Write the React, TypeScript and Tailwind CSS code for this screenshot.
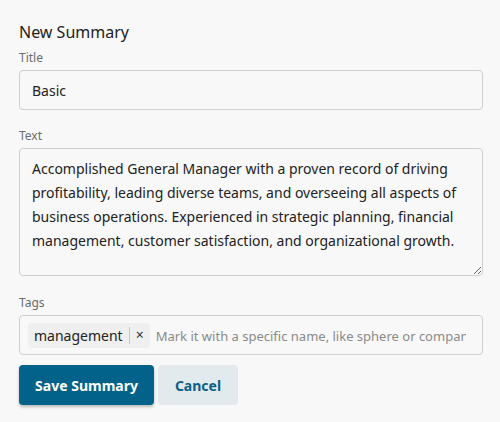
import { useState } from "react";

const summaryText =
  "Accomplished General Manager with a proven record of driving profitability, leading diverse teams, and overseeing all aspects of business operations. Experienced in strategic planning, financial management, customer satisfaction, and organizational growth.";

export default function App() {
  const [title, setTitle] = useState("Basic");
  const [text, setText] = useState(summaryText);
  const [tags, setTags] = useState<string[]>(["management"]);

  return (
    <div className="min-h-[422px] bg-[#f8f8f8] px-[19px] pt-5 text-[#222] [font-family:'Noto_Sans',sans-serif]">
      <h2 className="text-[16px] leading-6">New Summary</h2>

      <label className="mt-[5px] block text-[12px] leading-[18px] text-[#6b6b6b]">Title</label>
      <input
        value={title}
        onChange={(e) => setTitle(e.target.value)}
        className="mt-[3px] block h-10 w-[464px] rounded border border-[#cfcfcf] bg-[#f8f8f8] px-3 text-[14px] outline-none"
      />

      <label className="mt-[17px] block text-[12px] leading-[18px] text-[#6b6b6b]">Text</label>
      <textarea
        value={text}
        onChange={(e) => setText(e.target.value)}
        className="mt-[3px] block h-32 w-[464px] rounded border border-[#cfcfcf] bg-[#f8f8f8] px-3 py-2 text-[14px] leading-6 outline-none"
      />

      <label className="mt-[18px] block text-[12px] leading-[18px] text-[#6b6b6b]">Tags</label>
      <div className="mt-[3px] flex h-10 w-[464px] items-center gap-[6px] overflow-hidden rounded border border-[#cfcfcf] bg-[#f8f8f8] pl-2">
        {tags.map((tag) => (
          <span key={tag} className="flex h-[25px] shrink-0 items-center rounded-sm bg-[#efefef] pl-[6px] text-[14px]">
            {tag}
            <span className="ml-[6px] h-[17px] w-px bg-[#c8c8c8]" />
            <button
              onClick={() => setTags(tags.filter((t) => t !== tag))}
              className="px-[6px] text-[14px] leading-none text-[#333]"
            >
              ×
            </button>
          </span>
        ))}
        <input
          placeholder="Mark it with a specific name, like sphere or company"
          className="min-w-0 flex-1 bg-transparent pt-[3px] pr-4 text-[13px] outline-none placeholder:text-[#8a8a8a]"
        />
      </div>

      <div className="mt-[10px] flex gap-[4px]">
        <button className="h-10 w-[135px] rounded bg-[#03628a] text-[14px] font-bold text-white shadow-[0_2px_3px_rgba(0,0,0,0.25)]">
          Save Summary
        </button>
        <button className="h-10 w-[80px] rounded bg-[#e3eaee] text-[14px] font-bold text-[#0a5f86]">
          Cancel
        </button>
      </div>
    </div>
  );
}
